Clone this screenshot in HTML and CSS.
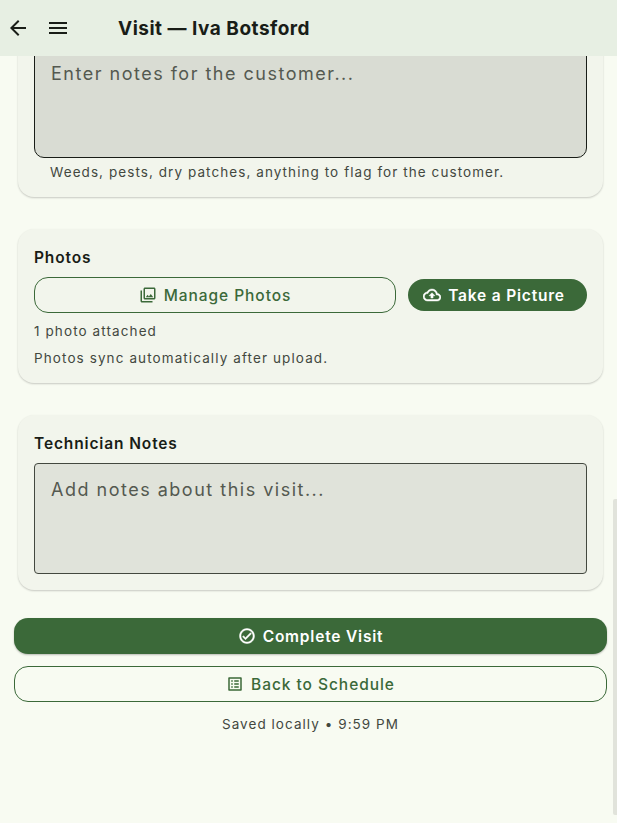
FILE: index.html
```html
<!DOCTYPE html>
<html lang="en">
<head>
    <meta charset="UTF-8">
    <meta name="viewport" content="width=device-width, initial-scale=1.0">
    <title>Visit — Iva Botsford</title>
    <link rel="stylesheet" href="styles.css">
</head>
<body>

    <header class="top-bar">
        <svg class="bar-icon" viewBox="0 0 24 24"><path d="M20 11H7.83l5.59-5.59L12 4l-8 8 8 8 1.41-1.41L7.83 13H20v-2z"/></svg>
        <svg class="bar-icon" viewBox="0 0 24 24"><path d="M3 18h18v-2H3v2zm0-5h18v-2H3v2zm0-7v2h18V6H3z"/></svg>
        <h1>Visit — Iva Botsford</h1>
    </header>

    <main class="content">
        <section class="card card-cut">
            <div class="notes notes-customer">Enter notes for the customer...</div>
            <p class="helper">Weeds, pests, dry patches, anything to flag for the customer.</p>
        </section>

        <section class="card">
            <h2>Photos</h2>
            <div class="photo-actions">
                <button class="btn btn-outline btn-grow">
                    <svg class="btn-icon" viewBox="0 0 24 24"><path d="M20 4v12H8V4h12m0-2H8c-1.1 0-2 .9-2 2v12c0 1.1.9 2 2 2h12c1.1 0 2-.9 2-2V4c0-1.1-.9-2-2-2zm-8.5 9.67l1.69 2.26 2.48-3.1L19 15H9zM2 6v14c0 1.1.9 2 2 2h14v-2H4V6H2z"/></svg>
                    Manage Photos
                </button>
                <button class="btn btn-solid btn-small">
                    <svg class="btn-icon" viewBox="0 0 24 24"><path d="M19.35 10.04C18.67 6.59 15.64 4 12 4 9.11 4 6.6 5.64 5.35 8.04 2.34 8.36 0 10.91 0 14c0 3.31 2.69 6 6 6h13c2.76 0 5-2.24 5-5 0-2.64-2.05-4.78-4.65-4.96zM19 18H6c-2.21 0-4-1.79-4-4 0-2.05 1.53-3.76 3.56-3.97l1.07-.11.5-.95C8.08 7.14 9.94 6 12 6c2.62 0 4.88 1.86 5.39 4.43l.3 1.5 1.53.11c1.56.1 2.78 1.41 2.78 2.96 0 1.65-1.35 3-3 3zM8 13h2.55v3h2.9v-3H16l-4-4z"/></svg>
                    Take a Picture
                </button>
            </div>
            <p class="meta">1 photo attached</p>
            <p class="meta">Photos sync automatically after upload.</p>
        </section>

        <section class="card">
            <h2>Technician Notes</h2>
            <div class="notes">Add notes about this visit...</div>
        </section>

        <div class="page-actions">
            <button class="btn btn-solid">
                <svg class="btn-icon" viewBox="0 0 24 24"><path d="M12 2C6.48 2 2 6.48 2 12s4.48 10 10 10 10-4.48 10-10S17.52 2 12 2zm0 18c-4.41 0-8-3.59-8-8s3.59-8 8-8 8 3.59 8 8-3.59 8-8 8zm4.59-12.42L10 14.17l-2.59-2.58L6 13l4 4 8-8z"/></svg>
                Complete Visit
            </button>
            <button class="btn btn-outline">
                <svg class="btn-icon" viewBox="0 0 24 24"><path d="M19 5v14H5V5h14m1.1-2H3.9c-.5 0-.9.4-.9.9v16.2c0 .4.4.9.9.9h16.2c.4 0 .9-.5.9-.9V3.9c0-.5-.5-.9-.9-.9zM11 7h6v2h-6V7zm0 4h6v2h-6v-2zm0 4h6v2h-6zM7 7h2v2H7zm0 4h2v2H7zm0 4h2v2H7z"/></svg>
                Back to Schedule
            </button>
            <p class="saved">Saved locally • 9:59 PM</p>
        </div>
    </main>

    <div class="scroll-thumb"></div>

</body>
</html>
```

FILE: styles.css
```css
body {
    font-family: 'Inter', 'Liberation Sans', sans-serif;
    background-color: #f8fbf2;
    color: #191d17;
    margin: 0;
    height: 823px;
    overflow: hidden;
}
.top-bar {
    position: absolute;
    top: 0;
    left: 0;
    right: 0;
    height: 56px;
    display: flex;
    align-items: center;
    gap: 16px;
    padding-left: 6px;
    background-color: #e7efe3;
}
.top-bar h1 {
    margin: 0 0 0 32px;
    font-size: 19px;
    font-weight: 700;
    letter-spacing: 0.5px;
}
.bar-icon {
    width: 24px;
    height: 24px;
    fill: #191d17;
}
.content {
    padding: 0 10px 0 14px;
}
.card {
    margin: 0 4px 32px;
    padding: 16px;
    background-color: #f2f5ec;
    border-radius: 16px;
    box-shadow: 0 1px 2px rgba(0, 0, 0, 0.2);
}
.card-cut {
    padding-top: 47px;
    border-radius: 0 0 16px 16px;
}
.card h2 {
    margin: 0 0 6px;
    font-size: 15.5px;
    line-height: 26px;
    font-weight: 600;
    letter-spacing: 0.87px;
}
.notes {
    box-sizing: border-box;
    height: 111px;
    padding: 14px 16px;
    background-color: #e0e3da;
    border: 1px solid #43483f;
    border-radius: 4px;
    color: #545950;
    font-size: 18px;
    line-height: 24px;
    letter-spacing: 1.5px;
}
.notes-customer {
    background-color: #d9dcd3;
    border-color: #191d17;
    border-radius: 0 0 10px 10px;
}
.helper {
    margin: 5px 0 0;
    padding: 0 16px;
    font-size: 13.5px;
    line-height: 18px;
    letter-spacing: 1.07px;
    color: #43483f;
}
.photo-actions {
    display: flex;
    align-items: center;
    gap: 12px;
    margin-bottom: 8px;
}
.meta {
    margin: 0 0 8px;
    font-size: 13.5px;
    line-height: 20px;
    letter-spacing: 1.1px;
    color: #43483f;
}
.meta:last-child {
    margin-bottom: 0;
    line-height: 18px;
}
.btn {
    display: flex;
    align-items: center;
    justify-content: center;
    gap: 7px;
    box-sizing: border-box;
    width: 100%;
    height: 36px;
    padding: 0 16px;
    border-radius: 14px;
    font-family: inherit;
    font-size: 15.5px;
    font-weight: 500;
    letter-spacing: 0.95px;
}
.btn-icon {
    width: 18px;
    height: 18px;
    fill: currentColor;
}
.btn-solid {
    background-color: #3b6939;
    color: #fff;
    border: none;
    box-shadow: 0 1px 2px rgba(0, 0, 0, 0.25);
    font-weight: 600;
    letter-spacing: 0.8px;
}
.btn-solid .btn-icon {
    stroke: currentColor;
    stroke-width: 0.6;
}
.btn-outline {
    background-color: transparent;
    color: #3b6939;
    border: 1px solid #3b6939;
}
.btn-grow {
    flex: 1;
    width: auto;
}
.btn-small {
    width: 179px;
    height: 32px;
    padding: 0 22px 0 15px;
    border-radius: 16px;
    box-shadow: none;
}
.page-actions {
    display: flex;
    flex-direction: column;
    gap: 12px;
    margin-top: -4px;
}
.saved {
    margin: 0;
    text-align: center;
    font-size: 13.5px;
    line-height: 20px;
    letter-spacing: 1.05px;
    color: #43483f;
}
.scroll-thumb {
    position: absolute;
    top: 499px;
    right: 0;
    width: 4px;
    height: 316px;
    background-color: #e1e3db;
    border-radius: 2px 0 0 2px;
}
```
